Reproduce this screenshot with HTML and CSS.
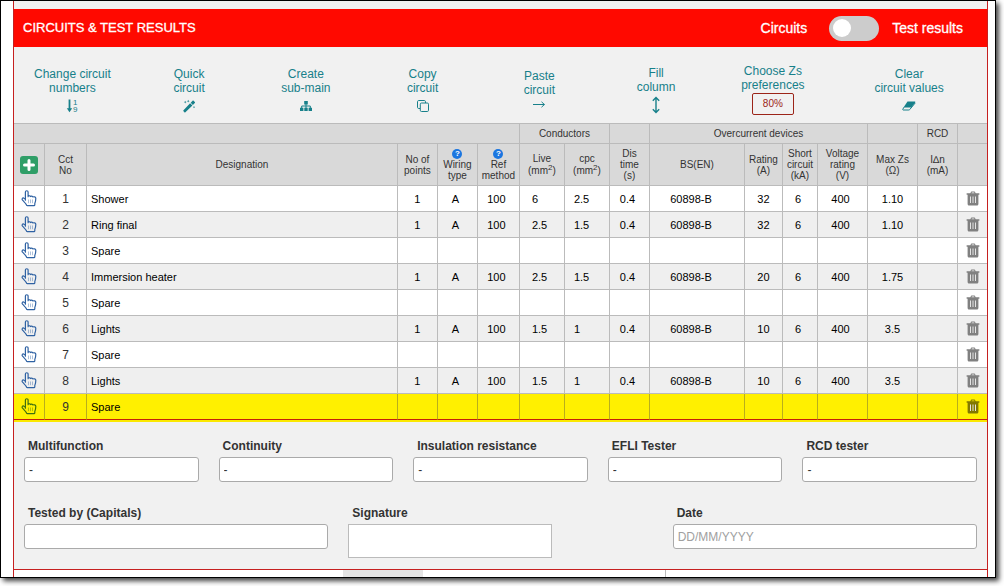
FILE: index.html
```html
<!DOCTYPE html>
<html lang="en">
<head>
    <meta charset="UTF-8">
    <meta name="viewport" content="width=device-width, initial-scale=1.0">
    <title>Circuits &amp; Test Results</title>
    <link rel="stylesheet" href="styles.css">
</head>
<body>
    <svg class="sprite" aria-hidden="true">
        <symbol id="hand" viewBox="0 0 16 17">
            <path fill="none" stroke="currentColor" stroke-width="1.2" stroke-linejoin="round" stroke-linecap="round" d="M4.4 10.2V2.1a1.3 1.3 0 0 1 2.7 0v4.6M7.1 6.3c.4-.8 1.9-.8 2.4.2.6-.7 2-.6 2.4.5.8-.5 2.9-.2 2.9 1.3 0 2-.3 3.600-1 5.100v1.300c0 .6-.3.9-.9.9H6.300c-.6 0-.9-.3-.9-.8-.6-1.600-2.600-3.100-3.900-4.600C.5 9 1.500 7.600 2.800 8.100l1.600 1.300"/>
            <path fill="none" stroke="currentColor" stroke-width=".8" opacity=".5" d="M7.500 9.500v3.700M9.500 9.500v3.700M11.500 9.500v3.700"/>
        </symbol>
        <symbol id="trash" viewBox="0 0 14 15">
            <path fill="currentColor" d="M4.300 2.200 5 .9C5.200.5 5.500.4 5.900.4h2.200c.4 0 .7.1.9.5l.7 1.300h3.300c.3 0 .5.2.5.500v.6c0 .3-.2.500-.5.500h-.6v9.200c0 .9-.6 1.500-1.400 1.500H3c-.8 0-1.400-.6-1.400-1.500V3.800H1c-.3 0-.5-.2-.5-.500v-.6c0-.3.200-.5.500-.5zM5.500 2.200h3l-.4-.8H5.900z"/>
            <path stroke="#e4e4e4" stroke-width="1" d="M4.500 5.500v6.500M7 5.500v6.500M9.500 5.500v6.500"/>
        </symbol>
    </svg>

    <div class="frame">
        <main class="panel">
            <div class="strip"></div>
            <header class="title-bar">
                <h1>CIRCUITS &amp; TEST RESULTS</h1>
                <div class="switch">
                    <span>Circuits</span>
                    <input type="checkbox" id="viewSwitch" role="switch">
                    <label for="viewSwitch">Test results</label>
                </div>
            </header>

            <nav class="toolbar">
                <button>Change circuit<br>numbers
                    <svg class="icon" viewBox="0 0 12 14">
                        <path fill="none" stroke="currentColor" stroke-width="1.800" d="M3.500 .5v10"/>
                        <path fill="currentColor" d="M.8 9.300h5.400L3.500 13.300z"/>
                        <text x="7" y="6.200" font-size="8">1</text>
                        <text x="7" y="13.300" font-size="8">9</text>
                    </svg>
                </button>
                <button>Quick<br>circuit
                    <svg class="icon" viewBox="0 0 12 14">
                        <path fill="currentColor" d="M.5 11.300 7.100 4.300l2.300 2.300-7 6.600c-.3.300-.7.300-1 0l-.9-.9c-.3-.3-.3-.7 0-1zM7.700 3.700l1.900-1.900c.3-.3.700-.3 1 0l1.200 1.200c.3.300.3.700 0 1L9.900 6zM2.200 1.700l.4 1 1 .4-1 .4-.4 1-.4-1-1-.4 1-.4zM5.200 .8l.4 1 1 .4-1 .4-.4 1-.4-1-1-.4 1-.4zM11 7l.3.800.8.300-.8.300-.3.800-.3-.8-.8-.3.800-.3z"/>
                    </svg>
                </button>
                <button>Create<br>sub-main
                    <svg class="icon" viewBox="0 0 12 14">
                        <path fill="currentColor" d="M4.200 2h3.600v3.400H4.200zM0 8.800h3.400V12H0zM4.300 8.800h3.400V12H4.300zM8.600 8.800H12V12H8.600z"/>
                        <path fill="none" stroke="currentColor" d="M6 5v4M1.700 9V7h8.600v2"/>
                    </svg>
                </button>
                <button>Copy<br>circuit
                    <svg class="icon" viewBox="0 0 12 14">
                        <rect x="3.300" y="4" width="8.200" height="8.500" rx="1.200" fill="none" stroke="currentColor"/>
                        <path fill="none" stroke="currentColor" d="M3 9.500H1.700c-.7 0-1.200-.5-1.200-1.200V2.700c0-.7.500-1.200 1.200-1.200h5.600c.7 0 1.200.500 1.200 1.200V4"/>
                    </svg>
                </button>
                <button>Paste<br>circuit
                    <svg class="icon icon-short" viewBox="0 0 12 8">
                        <path fill="none" stroke="currentColor" d="M0 3.500h11.500M8.500 .8 11.400 3.500 8.500 6.200"/>
                    </svg>
                </button>
                <button>Fill<br>column
                    <svg class="icon icon-tall" viewBox="0 0 10 18">
                        <path fill="none" stroke="currentColor" stroke-width="1.400" d="M5 2v14M1.800 4.800 5 1.600l3.200 3.200M1.800 13.200 5 16.400l3.200-3.200"/>
                    </svg>
                </button>
                <div class="tool">
                    Choose Zs<br>preferences
                    <button class="zs-button">80%</button>
                </div>
                <button>Clear<br>circuit values
                    <svg class="icon icon-wide" viewBox="0 0 14 14">
                        <path fill="currentColor" d="M5.500 2.500h7.200c.5 0 .8.400.5.900L9.300 8.400H1.500z"/>
                        <path fill="none" stroke="currentColor" stroke-linejoin="round" d="M2 8.200.8 10.200c-.2.400 0 .8.400.8h5.600c.4 0 .7-.1.900-.4l5.500-6.600"/>
                    </svg>
                </button>
            </nav>

            <table class="circuits">
                <colgroup>
                    <col class="w31"><col class="w42"><col>
                    <col class="w40"><col class="w40"><col class="w42">
                    <col class="w45"><col class="w45"><col class="w40">
                    <col class="w95"><col class="w38"><col class="w35"><col class="w50">
                    <col class="w50"><col class="w40"><col class="w29">
                </colgroup>
                <thead>
                    <tr class="groups">
                        <th colspan="6"></th>
                        <th colspan="2">Conductors</th>
                        <th></th>
                        <th colspan="4">Overcurrent devices</th>
                        <th></th>
                        <th>RCD</th>
                        <th></th>
                    </tr>
                    <tr class="columns">
                        <th>
                            <button class="add" aria-label="Add circuit">
                                <svg viewBox="0 0 18 18"><path stroke="#fff" stroke-width="3" stroke-linecap="round" d="M9 4.500v9M4.500 9h9"/></svg>
                            </button>
                        </th>
                        <th>Cct<br>No</th>
                        <th>Designation</th>
                        <th>No of<br>points</th>
                        <th><button class="help" aria-label="Wiring type help">?</button>Wiring<br>type</th>
                        <th><button class="help" aria-label="Ref method help">?</button>Ref<br>method</th>
                        <th>Live<br>(mm<sup>2</sup>)</th>
                        <th>cpc<br>(mm<sup>2</sup>)</th>
                        <th>Dis<br>time<br>(s)</th>
                        <th>BS(EN)</th>
                        <th>Rating<br>(A)</th>
                        <th>Short<br>circuit<br>(kA)</th>
                        <th>Voltage<br>rating<br>(V)</th>
                        <th>Max Zs<br>(Ω)</th>
                        <th>I∆n<br>(mA)</th>
                        <th></th>
                    </tr>
                </thead>
                <tbody id="circuitRows"></tbody>
            </table>

            <form class="testers">
                <div class="fields five">
                    <div class="field"><label for="multi">Multifunction</label><input type="text" id="multi" value="-"></div>
                    <div class="field"><label for="continuity">Continuity</label><input type="text" id="continuity" value="-"></div>
                    <div class="field"><label for="insulation">Insulation resistance</label><input type="text" id="insulation" value="-"></div>
                    <div class="field"><label for="efli">EFLI Tester</label><input type="text" id="efli" value="-"></div>
                    <div class="field"><label for="rcd">RCD tester</label><input type="text" id="rcd" value="-"></div>
                </div>
                <div class="fields three">
                    <div class="field"><label for="testedBy">Tested by (Capitals)</label><input type="text" id="testedBy"></div>
                    <div class="field"><label for="signature">Signature</label><input type="text" id="signature" class="signature" readonly></div>
                    <div class="field"><label for="date">Date</label><input type="text" id="date" placeholder="DD/MM/YYYY"></div>
                </div>
            </form>

            <div class="next-section">
                <div></div>
                <div class="tab"></div>
                <div class="divider"></div>
                <div></div>
            </div>
        </main>
    </div>

    <script>
        // name, points, wiring, ref, live, cpc, dis time, BS(EN), rating, kA, volts, max Zs
        const circuits = [
            ['Shower', '1', 'A', '100', '6', '2.5', '0.4', '60898-B', '32', '6', '400', '1.10'],
            ['Ring final', '1', 'A', '100', '2.5', '1.5', '0.4', '60898-B', '32', '6', '400', '1.10'],
            ['Spare'],
            ['Immersion heater', '1', 'A', '100', '2.5', '1.5', '0.4', '60898-B', '20', '6', '400', '1.75'],
            ['Spare'],
            ['Lights', '1', 'A', '100', '1.5', '1', '0.4', '60898-B', '10', '6', '400', '3.5'],
            ['Spare'],
            ['Lights', '1', 'A', '100', '1.5', '1', '0.4', '60898-B', '10', '6', '400', '3.5'],
            ['Spare']
        ];
        const classes = ['name', '', 'pick', 'pick', 'live', 'cpc', 'pick', 'bs', '', 'pick', 'pick', '', ''];

        document.getElementById('circuitRows').innerHTML = circuits.map((circuit, index) => {
            const number = index + 1;
            const cells = classes.map((name, i) => `<td class="${name}">${circuit[i] || ''}</td>`).join('');
            return `
                <tr class="${number === circuits.length ? 'selected' : ''}">
                    <td><button class="row-button" aria-label="Select circuit ${number}"><svg class="hand"><use href="#hand"/></svg></button></td>
                    <td class="number">${number}</td>
                    ${cells}
                    <td><button class="row-button" aria-label="Delete circuit ${number}"><svg class="trash"><use href="#trash"/></svg></button></td>
                </tr>
            `;
        }).join('');
    </script>
</body>
</html>
```
FILE: styles.css
```css
* {
    box-sizing: border-box;
}
body {
    margin: 0;
    padding: 0 8px 8px 0;
    background-color: #fff;
    color: #333;
    font-family: "Liberation Sans", Arial, sans-serif;
    font-size: 12px;
    line-height: 14px;
}
button, input {
    font-family: inherit;
    font-size: inherit;
    line-height: inherit;
    color: inherit;
}
button {
    padding: 0;
    border: none;
    background: none;
    cursor: pointer;
}
.sprite {
    display: none;
}
.frame {
    border: 1px solid #000;
    padding: 0 7px 0 12px;
    background-color: #fff;
    box-shadow: 3px 3px 5px rgba(0, 0, 0, 0.75);
}
.panel {
    border: solid #c62020;
    border-width: 0 1px;
    background-color: #f1f1f1;
}
.strip {
    height: 8px;
}

/* title bar */
.title-bar {
    display: flex;
    justify-content: space-between;
    align-items: center;
    height: 38px;
    padding: 0 24px 0 9px;
    background-color: #ff0900;
    color: #fff;
}
.title-bar h1 {
    margin: 0;
    font-size: 13px;
    font-weight: normal;
    -webkit-text-stroke: 0.3px #fff;
}
.switch {
    display: flex;
    align-items: center;
    font-size: 14px;
    -webkit-text-stroke: 0.3px #fff;
}
.switch input {
    appearance: none;
    display: flex;
    align-items: center;
    width: 50px;
    height: 25px;
    margin: 0 13px 0 22px;
    padding: 0 4px;
    border-radius: 13px;
    background-color: #ccc;
    cursor: pointer;
}
.switch input::before {
    content: "";
    width: 18px;
    height: 18px;
    border-radius: 50%;
    background-color: #fff;
}
.switch input:checked {
    justify-content: flex-end;
}

/* toolbar */
.toolbar {
    display: grid;
    grid-template-columns: repeat(7, 12%) 1fr;
    align-items: center;
    height: 76px;
    padding-top: 9px;
    color: #17808a;
    text-align: center;
}
.icon {
    display: block;
    width: 12px;
    height: 14px;
    margin: 4px auto 0;
    fill: currentColor;
}
.icon-short {
    height: 8px;
    margin: 4px auto 2px;
}
.icon-tall {
    width: 10px;
    height: 18px;
    margin: 2px auto 0;
}
.icon-wide {
    width: 14px;
}
.zs-button {
    display: block;
    width: 42px;
    height: 22px;
    margin: 1px auto 0;
    border: 1px solid #9c2418;
    border-radius: 2px;
    color: #9c2418;
    font-size: 10px;
}

/* circuits table */
.circuits {
    width: 100%;
    table-layout: fixed;
    border-collapse: separate;
    border-spacing: 0;
    border-top: 1px solid #bbb;
    font-size: 11px;
    color: #000;
    text-align: center;
}
.w29 { width: 29px; }
.w31 { width: 31px; }
.w35 { width: 35px; }
.w38 { width: 38px; }
.w40 { width: 40px; }
.w42 { width: 42px; }
.w45 { width: 45px; }
.w50 { width: 50px; }
.w95 { width: 95px; }
.circuits th, .circuits td {
    padding: 0;
    border-right: 1px solid #bbb;
    border-bottom: 1px solid #bbb;
}
.circuits th:last-child, .circuits td:last-child {
    border-right: none;
}
.circuits th {
    background-color: #d9d9d9;
    color: #333;
    font-size: 10px;
    font-weight: normal;
    line-height: 11px;
}
.groups th {
    height: 20px;
}
.columns th {
    height: 42px;
}
.circuits sup {
    font-size: 8px;
    line-height: 8px;
}
.circuits td {
    height: 26px;
    background-color: #fff;
}
.circuits tr:nth-child(even) td {
    background-color: #efefef;
}
.circuits td.number {
    color: #333;
    font-size: 12px;
}
.circuits td.name {
    padding-left: 4px;
    text-align: left;
}
.circuits td.pick {
    padding-right: 4px;
}
.circuits td.bs {
    padding-right: 12px;
}
.circuits td.live {
    padding-left: 12px;
    text-align: left;
}
.circuits td.cpc {
    padding-left: 9px;
    text-align: left;
}
.circuits tr.selected td {
    border-right-color: #b9ae1c;
    border-bottom-color: #c4200a;
    background-color: #fff000;
    box-shadow: 0 2px 0 #fbe800;
}
.add {
    display: block;
    width: 18px;
    height: 18px;
    margin: 0 auto;
    border-radius: 3px;
    background-color: #2f9e67;
}
.add svg {
    display: block;
}
.help {
    display: block;
    width: 10px;
    height: 10px;
    margin: 0 auto;
    border-radius: 50%;
    background-color: #1b76e0;
    color: #fff;
    font-size: 8px;
    font-weight: bold;
    line-height: 10px;
}
.row-button {
    display: block;
    margin: 0 auto;
    color: #2f62a3;
}
.row-button svg {
    display: block;
}
.hand {
    width: 16px;
    height: 17px;
}
.trash {
    width: 14px;
    height: 15px;
    color: #808080;
}
.selected .hand {
    color: #3f7010;
}
.selected .trash {
    color: #827800;
}

/* tester details */
.testers {
    padding: 19px 0 11px;
}
.fields {
    display: grid;
}
.five {
    grid-template-columns: repeat(5, 1fr);
    margin-bottom: 24px;
}
.three {
    grid-template-columns: repeat(3, 1fr);
}
.field {
    padding: 0 10px;
}
.field label {
    display: block;
    padding-left: 4px;
    margin-bottom: 4px;
    font-weight: bold;
}
.field input {
    display: block;
    width: 100%;
    height: 25px;
    padding: 0 4px;
    border: 1px solid #aaa;
    border-radius: 3px;
    background-color: #fff;
}
.field input::placeholder {
    color: #a0a0a0;
}
.field .signature {
    width: 204px;
    height: 34px;
    border-color: #bbb;
    border-radius: 0;
}

/* top edge of the section below */
.next-section {
    display: grid;
    grid-template-columns: 329fr 80fr 243fr 321fr;
    height: 8px;
    border-top: 1px solid #c62020;
    background-color: #fff;
}
.tab {
    background-color: #e4e4e4;
}
.divider {
    border-right: 1px solid #bbb;
}
```
